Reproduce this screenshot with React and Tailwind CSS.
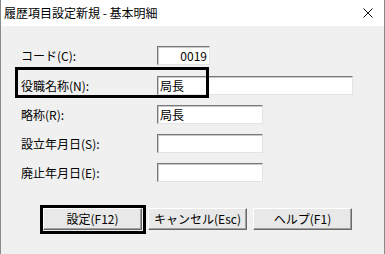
const font = { fontFamily: '"Noto Sans CJK JP", "Liberation Sans", sans-serif' };

function Field({ w, value, align = 'left' }) {
  return (
    <div
      className={`h-[19px] ${w} bg-white border border-t-[#7a7a7a] border-l-[#7a7a7a] border-b-[#e3e3e3] border-r-[#e3e3e3] shadow-[inset_1px_1px_0_#c8c8c8] flex items-center px-[2px] text-[12px] leading-none text-black ${align === 'right' ? 'justify-end' : ''}`}
    >
      {value}
    </div>
  );
}

function Row({ label, children }) {
  return (
    <div className="flex items-center h-[19px]">
      <span className="w-[136px] text-[12px] leading-none text-black">{label}</span>
      {children}
    </div>
  );
}

function Btn({ children }) {
  return (
    <button className="w-[99px] h-[22px] bg-[#e8e8e8] border border-t-white border-l-white border-b-[#696969] border-r-[#696969] shadow-[inset_-1px_-1px_0_#a0a0a0] text-[12px] leading-none text-black flex items-center justify-center">
      {children}
    </button>
  );
}

export default function App() {
  return (
    <div className="relative w-[385px] h-[254px] bg-[#f0f0f0] border-x border-[#8a8a8a] overflow-hidden" style={font}>
      {/* title bar */}
      <div className="h-[26px] bg-white flex items-center justify-between pl-[3px] pr-[10px]">
        <span className="text-[12px] leading-none text-black">履歴項目設定新規 - 基本明細</span>
        <svg width="10" height="10" viewBox="0 0 10 10" className="mr-[1px]">
          <path d="M0.5 0.5L9.5 9.5M9.5 0.5L0.5 9.5" stroke="#111" strokeWidth="1" />
        </svg>
      </div>

      {/* form */}
      <div className="pl-[20px] pt-[20px] flex flex-col gap-[10px]">
        <Row label="コード(C):"><Field w="w-[53px]" value="0019" align="right" /></Row>
        <div className="mt-[1px]">
          <Row label="役職名称(N):"><Field w="w-[196px]" value="局長" /></Row>
        </div>
        <Row label="略称(R):"><Field w="w-[106px]" value="局長" /></Row>
        <Row label="設立年月日(S):"><Field w="w-[106px]" value="" /></Row>
        <Row label="廃止年月日(E):"><Field w="w-[106px]" value="" /></Row>
      </div>

      {/* buttons */}
      <div className="flex gap-[6px] pl-[42px] mt-[26px]">
        <Btn>設定(F12)</Btn>
        <Btn>キャンセル(Esc)</Btn>
        <Btn>ヘルプ(F1)</Btn>
      </div>

      {/* highlight frames */}
      <div className="absolute left-[14px] top-[67px] w-[194px] h-[31px] border-[3px] border-black pointer-events-none" />
      <div className="absolute left-[39px] top-[205px] w-[106px] h-[29px] border-[3px] border-black pointer-events-none" />
    </div>
  );
}
